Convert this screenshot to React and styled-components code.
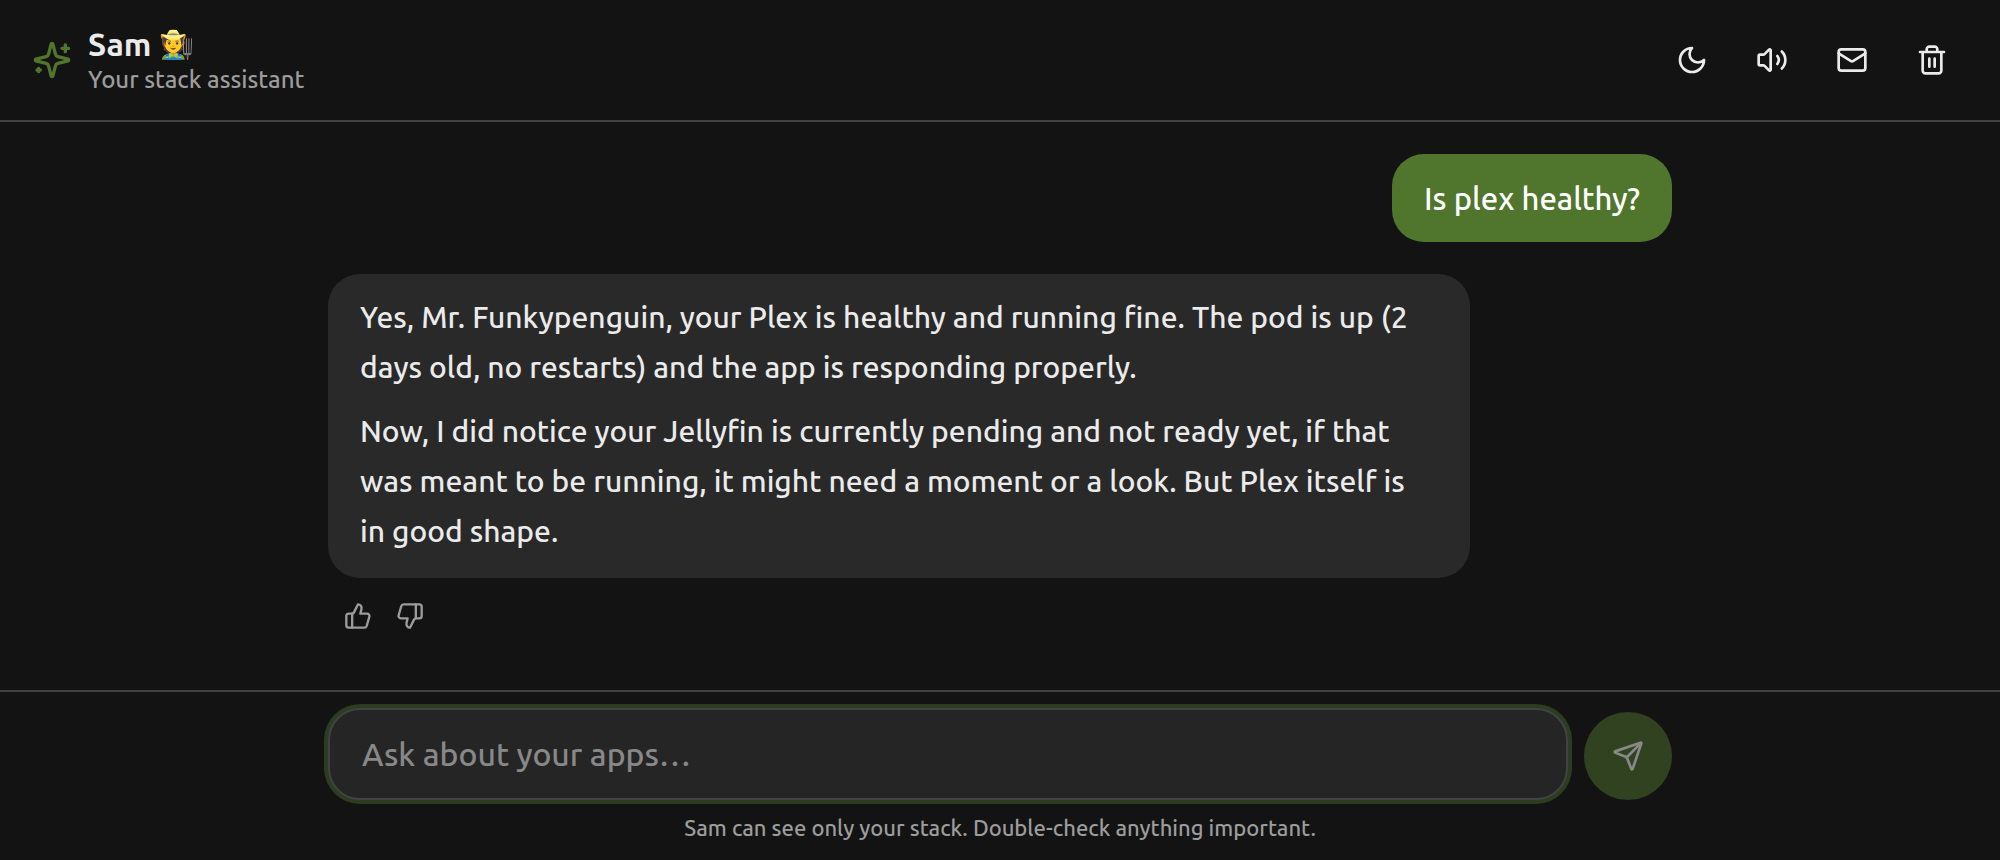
import React, { useState } from 'react';
import styled, { createGlobalStyle, ThemeProvider } from 'styled-components';

const theme = {
  bg: '#131313',
  line: '#424242',
  bubble: '#292929',
  field: '#252525',
  green: '#50762d',
  greenDim: '#304220',
  ring: '#2c3d1f',
  text: '#ebebeb',
  muted: '#9c9c9c',
  placeholder: '#888888',
};

const GlobalStyle = createGlobalStyle`
  *, *::before, *::after { box-sizing: border-box; }
  body {
    margin: 0;
    background: ${theme.bg};
    color: ${theme.text};
    font-family: Ubuntu, 'Noto Sans', 'Open Sans', sans-serif;
    font-weight: 500;
  }
  button, input { font-family: inherit; font-weight: inherit; }
`;

const Page = styled.div`
  display: flex;
  flex-direction: column;
  min-height: 100vh;
`;

const Header = styled.header`
  display: flex;
  align-items: center;
  justify-content: space-between;
  padding: 24px 32px;
  border-bottom: 2px solid ${({ theme }) => theme.line};
`;

const Brand = styled.div`
  display: flex;
  align-items: center;
  gap: 16px;
  color: ${({ theme }) => theme.green};
`;

const Title = styled.h1`
  display: flex;
  align-items: center;
  gap: 8px;
  margin: 0;
  font-size: 32px;
  font-weight: 700;
  line-height: 40px;
  color: ${({ theme }) => theme.text};
`;

const Emoji = styled.span`
  font-size: 28px;
`;

const Subtitle = styled.p`
  margin: 0;
  font-size: 24px;
  line-height: 32px;
  color: ${({ theme }) => theme.muted};
`;

const Toolbar = styled.nav`
  display: flex;
  gap: 8px;
`;

const IconButton = styled.button`
  display: flex;
  align-items: center;
  justify-content: center;
  width: ${({ $size }) => $size}px;
  height: ${({ $size }) => $size}px;
  padding: 0;
  border: 0;
  border-radius: 16px;
  background: transparent;
  color: ${({ theme, $muted }) => ($muted ? theme.muted : theme.text)};
  cursor: pointer;
`;

const SendButton = styled(IconButton)`
  flex: none;
  border-radius: 50%;
  background: ${({ theme }) => theme.greenDim};
  color: ${({ theme }) => theme.placeholder};
`;

const Column = styled.div`
  width: 100%;
  max-width: 1344px;
  margin: 0 auto;
`;

const Conversation = styled.main`
  flex: 1;
  padding: 32px 0;
`;

const Thread = styled(Column)`
  display: flex;
  flex-direction: column;
  align-items: flex-start;
  gap: 32px;
`;

const Message = styled.div`
  display: flex;
  flex-direction: column;
  gap: 16px;
  max-width: 85%;
  align-self: ${({ $mine }) => ($mine ? 'flex-end' : 'flex-start')};
`;

const Bubble = styled.div`
  display: flex;
  flex-direction: column;
  gap: 14px;
  padding: ${({ $mine }) => ($mine ? '21px 32px 19px' : '18px 40px 22px 32px')};
  border-radius: 32px;
  background: ${({ theme, $mine }) => ($mine ? theme.green : theme.bubble)};
  color: ${({ theme, $mine }) => ($mine ? '#ffffff' : theme.text)};
  font-size: ${({ $mine }) => ($mine ? 31 : 30)}px;
  line-height: ${({ $mine }) => ($mine ? 48 : 50)}px;
`;

const Paragraph = styled.p`
  margin: 0;
`;

const Feedback = styled.div`
  display: flex;
  gap: 8px;
  padding-left: 8px;
`;

const Footer = styled.footer`
  padding: 16px 0;
  border-top: 2px solid ${({ theme }) => theme.line};
`;

const Composer = styled.form`
  display: flex;
  align-items: flex-end;
  gap: 16px;
`;

const Field = styled.input`
  flex: 1;
  min-width: 0;
  height: 92px;
  padding: 0 32px;
  border: 2px solid ${({ theme }) => theme.line};
  border-radius: 32px;
  outline: none;
  box-shadow: 0 0 0 4px ${({ theme }) => theme.ring};
  background: ${({ theme }) => theme.field};
  color: ${({ theme }) => theme.text};
  font-size: 32px;
  &::placeholder { color: ${({ theme }) => theme.placeholder}; opacity: 1; }
`;

const Note = styled.p`
  margin: 12px 0 0;
  font-size: 22px;
  line-height: 32px;
  text-align: center;
  color: ${({ theme }) => theme.muted};
`;

const Glyph = styled.svg`
  display: block;
  flex: none;
  fill: none;
  stroke: currentColor;
  stroke-width: 2;
  stroke-linecap: round;
  stroke-linejoin: round;
`;

function Icon({ size = 32, children }) {
  return (
    <Glyph width={size} height={size} viewBox="0 0 24 24" aria-hidden="true">
      {children}
    </Glyph>
  );
}

const SparklesIcon = () => (
  <Icon size={40}>
    <path d="M9.937 15.5A2 2 0 0 0 8.5 14.063l-6.135-1.582a.5.5 0 0 1 0-.962L8.5 9.936A2 2 0 0 0 9.937 8.5l1.582-6.135a.5.5 0 0 1 .963 0L14.063 8.5A2 2 0 0 0 15.5 9.937l6.135 1.581a.5.5 0 0 1 0 .964L15.5 14.063a2 2 0 0 0-1.437 1.437l-1.582 6.135a.5.5 0 0 1-.963 0z" />
    <path d="M20 3v4M22 5h-4M4 17v2M5 18H3" />
  </Icon>
);

const MoonIcon = () => (
  <Icon>
    <path d="M12 3a6 6 0 0 0 9 9 9 9 0 1 1-9-9Z" />
  </Icon>
);

const VolumeIcon = () => (
  <Icon>
    <path d="M11 4.702a.705.705 0 0 0-1.203-.498L6.413 7.587A1.4 1.4 0 0 1 5.416 8H3a1 1 0 0 0-1 1v6a1 1 0 0 0 1 1h2.416a1.4 1.4 0 0 1 .997.413l3.383 3.384A.705.705 0 0 0 11 19.298z" />
    <path d="M16 9a5 5 0 0 1 0 6" />
    <path d="M19.364 18.364a9 9 0 0 0 0-12.728" />
  </Icon>
);

const MailIcon = () => (
  <Icon>
    <rect width="20" height="16" x="2" y="4" rx="2" />
    <path d="m22 7-8.97 5.7a1.94 1.94 0 0 1-2.06 0L2 7" />
  </Icon>
);

const TrashIcon = () => (
  <Icon>
    <path d="M3 6h18M19 6v14c0 1-1 2-2 2H7c-1 0-2-1-2-2V6M8 6V4c0-1 1-2 2-2h4c1 0 2 1 2 2v2M10 11v6M14 11v6" />
  </Icon>
);

const ThumbsUpIcon = () => (
  <Icon size={28}>
    <path d="M7 10v12" />
    <path d="M15 5.88 14 10h5.83a2 2 0 0 1 1.92 2.56l-2.33 8A2 2 0 0 1 17.5 22H4a2 2 0 0 1-2-2v-8a2 2 0 0 1 2-2h2.76a2 2 0 0 0 1.79-1.11L12 2a3.13 3.13 0 0 1 3 3.88Z" />
  </Icon>
);

const ThumbsDownIcon = () => (
  <Icon size={28}>
    <path d="M17 14V2" />
    <path d="M9 18.12 10 14H4.17a2 2 0 0 1-1.92-2.56l2.33-8A2 2 0 0 1 6.5 2H20a2 2 0 0 1 2 2v8a2 2 0 0 1-2 2h-2.76a2 2 0 0 0-1.79 1.11L12 22a3.13 3.13 0 0 1-3-3.88Z" />
  </Icon>
);

const SendIcon = () => (
  <Icon>
    <path d="M14.536 21.686a.5.5 0 0 0 .937-.024l6.5-19a.496.496 0 0 0-.635-.635l-19 6.5a.5.5 0 0 0-.024.937l7.93 3.18a2 2 0 0 1 1.112 1.11z" />
    <path d="m21.854 2.147-10.94 10.939" />
  </Icon>
);

const actions = [
  { label: 'Toggle dark mode', Glyph: MoonIcon },
  { label: 'Toggle sound', Glyph: VolumeIcon },
  { label: 'Email conversation', Glyph: MailIcon },
  { label: 'Clear conversation', Glyph: TrashIcon },
];

export default function App() {
  const [draft, setDraft] = useState('');

  return (
    <ThemeProvider theme={theme}>
      <GlobalStyle />
      <Page>
        <Header>
          <Brand>
            <SparklesIcon />
            <div>
              <Title>
                Sam <Emoji>🧑‍🌾</Emoji>
              </Title>
              <Subtitle>Your stack assistant</Subtitle>
            </div>
          </Brand>
          <Toolbar aria-label="Chat actions">
            {actions.map(({ label, Glyph: ActionIcon }) => (
              <IconButton key={label} type="button" $size={72} aria-label={label}>
                <ActionIcon />
              </IconButton>
            ))}
          </Toolbar>
        </Header>

        <Conversation>
          <Thread>
            <Message $mine>
              <Bubble $mine>
                <Paragraph>Is plex healthy?</Paragraph>
              </Bubble>
            </Message>
            <Message>
              <Bubble>
                <Paragraph>
                  Yes, Mr. Funkypenguin, your Plex is healthy and running fine. The pod is up (2
                  days old, no restarts) and the app is responding properly.
                </Paragraph>
                <Paragraph>
                  Now, I did notice your Jellyfin is currently pending and not ready yet, if that
                  was meant to be running, it might need a moment or a look. But Plex itself is in
                  good shape.
                </Paragraph>
              </Bubble>
              <Feedback>
                <IconButton type="button" $size={44} $muted aria-label="Good answer">
                  <ThumbsUpIcon />
                </IconButton>
                <IconButton type="button" $size={44} $muted aria-label="Bad answer">
                  <ThumbsDownIcon />
                </IconButton>
              </Feedback>
            </Message>
          </Thread>
        </Conversation>

        <Footer>
          <Column>
            <Composer onSubmit={(event) => event.preventDefault()}>
              <Field
                type="text"
                aria-label="Message"
                placeholder="Ask about your apps…"
                value={draft}
                onChange={(event) => setDraft(event.target.value)}
              />
              <SendButton type="submit" $size={88} aria-label="Send">
                <SendIcon />
              </SendButton>
            </Composer>
            <Note>Sam can see only your stack. Double-check anything important.</Note>
          </Column>
        </Footer>
      </Page>
    </ThemeProvider>
  );
}
